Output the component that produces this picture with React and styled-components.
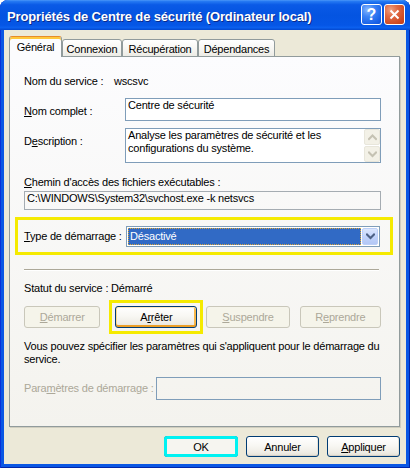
import React from 'react';
import styled, { createGlobalStyle } from 'styled-components';

const Global = createGlobalStyle`
  html, body { margin: 0; padding: 0; background: #ffffff; }
  body { font-family: "Liberation Sans", Arial, sans-serif; font-size: 11px; color: #000; letter-spacing: -0.2px; }
  #root { width: 410px; height: 468px; }
`;

const Window = styled.div`
  width: 410px;
  height: 468px;
  box-sizing: border-box;
  display: flex;
  flex-direction: column;
  background: #0a57e4;
  border-radius: 8px 8px 0 0;
  overflow: hidden;
  box-shadow: inset 1px 0 #0831d9, inset -1px 0 #0025a8, inset 0 -1px #0025a8;
`;

const TitleBar = styled.div`
  height: 30px;
  flex: none;
  display: flex;
  align-items: center;
  padding: 2px 5px 0 7px;
  box-sizing: border-box;
  background: linear-gradient(180deg, #4a97f8 0%, #2478f2 5%, #0a5ae6 16%, #0454e1 50%, #0556e6 84%, #0b60ee 92%, #0348cf 100%);
`;

const Title = styled.div`
  flex: 1;
  color: #fff;
  font: bold 13px "Liberation Sans", Arial, sans-serif;
  letter-spacing: -0.15px;
  text-shadow: 1px 1px 0 #0c2a8a;
  white-space: nowrap;
`;

const Controls = styled.div`
  display: flex;
  gap: 2px;
  margin-top: -3px;
`;

const CtrlButton = styled.div`
  width: 21px;
  height: 21px;
  box-sizing: border-box;
  border: 1px solid #fff;
  border-radius: 3px;
  display: flex;
  align-items: center;
  justify-content: center;
  color: #fff;
  font: bold 16px "Liberation Sans", Arial, sans-serif;
  letter-spacing: 0;
  background: ${p => p.$close
    ? 'radial-gradient(circle at 30% 25%, #f0a080 0%, #e06a44 35%, #cf4a22 75%, #c03c18 100%)'
    : 'radial-gradient(circle at 30% 25%, #8ab8ff 0%, #3d84f5 35%, #1a62e8 75%, #0f52d8 100%)'};
`;

const Body = styled.div`
  flex: 1;
  margin: 0 4px 4px 4px;
  padding: 6px 6px 0 5px;
  background: #ece9d8;
  display: flex;
  flex-direction: column;
`;

const TabRow = styled.div`
  display: flex;
  align-items: flex-end;
  height: 21px;
  margin-bottom: -1px;
  position: relative;
  z-index: 1;
`;

const Tab = styled.div`
  width: ${p => p.$w}px;
  height: ${p => (p.$active ? 21 : 18)}px;
  box-sizing: border-box;
  display: flex;
  align-items: center;
  justify-content: center;
  border: 1px solid #919b9c;
  border-radius: 3px 3px 0 0;
  padding-top: ${p => (p.$active ? 0 : 1)}px;
  ${p => p.$active
    ? `border-bottom: none; border-top: 1px solid #e68b2c; background: #fcfcfe; box-shadow: inset 0 2px #ffc83c;`
    : `background: linear-gradient(180deg, #ffffff 0%, #f6f5f1 60%, #ecebe5 100%);`}
`;

const Panel = styled.div`
  height: 371px;
  box-sizing: border-box;
  border: 1px solid #919b9c;
  box-shadow: 1px 1px 0 #d0cebf;
  background: linear-gradient(180deg, #fcfcfe 0%, #f4f3ee 100%);
  padding: 18px 18px 0 14px;
  display: flex;
  flex-direction: column;
`;

const Line = styled.div`
  line-height: 13px;
  margin-top: ${p => p.$mt || 0}px;
  color: ${p => (p.$disabled ? '#aca899' : '#000')};
  white-space: nowrap;
`;

const Para = styled.div`
  line-height: 13px;
  margin-top: ${p => p.$mt || 0}px;
  white-space: nowrap;
`;

const FieldRow = styled.div`
  display: grid;
  grid-template-columns: ${p => p.$label}px 1fr;
  align-items: start;
  margin-top: ${p => p.$mt || 0}px;
`;

const Label = styled.div`
  line-height: 13px;
  padding-top: ${p => p.$pt || 0}px;
  color: ${p => (p.$disabled ? '#aca899' : '#000')};
  white-space: nowrap;
`;

const TextBox = styled.div`
  height: ${p => p.$h}px;
  margin-top: ${p => p.$mt || 0}px;
  box-sizing: border-box;
  border: 1px solid ${p => (p.$gray ? '#a5acb2' : '#7f9db9')};
  background: ${p => (p.$readonly ? 'transparent' : '#fff')};
  padding: 0 2px;
  line-height: 13px;
  display: flex;
  white-space: nowrap;
`;

const BoxText = styled.div`
  flex: 1;
`;

const ScrollCol = styled.div`
  width: 16px;
  display: flex;
  flex-direction: column;
  gap: 1px;
  margin-right: -2px;
`;

const ScrollBtn = styled.div`
  height: 16px;
  box-sizing: border-box;
  border: 1px solid #e8e6db;
  border-radius: 2px;
  background: #f3f1e7;
  display: flex;
  align-items: center;
  justify-content: center;
`;

const Highlight = styled.div`
  margin: 7px -12px 0 -9px;
  border: 3px solid #f5ea00;
  padding: 6px 0 5px 6px;
  display: grid;
  grid-template-columns: 102px 254px;
  align-items: start;
`;

const Combo = styled.div`
  height: 21px;
  box-sizing: border-box;
  border: 1px solid #7f9db9;
  background: #fff;
  display: flex;
  align-items: stretch;
  padding: 1px;
  gap: 1px;
`;

const Selection = styled.div`
  flex: 1;
  background: #316ac5;
  color: #fff;
  border: 1px dotted #d9a53a;
  line-height: 15px;
  padding-left: 1px;
`;

const DropBtn = styled.div`
  width: 16px;
  box-sizing: border-box;
  border: 1px solid #bccff7;
  border-radius: 2px;
  background: linear-gradient(180deg, #dbe6fd 0%, #c2d4fb 50%, #b3c7f5 100%);
  display: flex;
  align-items: center;
  justify-content: center;
`;

const Separator = styled.div`
  margin-top: 14px;
  margin-right: 2px;
  height: 1px;
  background: #aca899;
  box-shadow: 0 1px 0 #ffffff;
`;

const ButtonRow = styled.div`
  display: flex;
  margin-top: 11px;
`;

const Button = styled.button`
  width: ${p => p.$w}px;
  height: ${p => p.$h || 22}px;
  margin-left: ${p => p.$ml || 0}px;
  padding: 0;
  box-sizing: border-box;
  font: 11px "Liberation Sans", Arial, sans-serif;
  letter-spacing: -0.2px;
  color: #000;
  border: 1px solid #003c74;
  border-radius: 3px;
  background: linear-gradient(180deg, #ffffff 0%, #f8f7f3 45%, #efede6 80%, #e4e1d6 100%);
  box-shadow: inset 0 -1px #d6d0c5, inset -1px 0 #e6e3d9;
  ${p => p.$hot && `
    box-shadow: inset 0 -2px #eb9e26, inset 0 1px #fde8c1, inset 1px 0 #fcd895, inset -2px 0 #f7b84b;
  `}
  ${p => p.$disabled && `
    border-color: #c9c7ba;
    color: #aca899;
    background: #f5f4ea;
    box-shadow: none;
  `}
  ${p => p.$cyan && `
    outline: 3px solid #00f2f2;
    outline-offset: -3px;
    background: #f6f5f0;
  `}
`;

const Footer = styled.div`
  display: flex;
  justify-content: flex-end;
  gap: 8px;
  margin-top: 9px;
`;

const HotWrap = styled.div`
  margin-left: 15px;
  outline: 3px solid #f5ea00;
  outline-offset: 3px;
  height: 22px;
`;

const Chevron = ({ dir = 'down', color = '#4d6185' }) => (
  <svg width="9" height="7" viewBox="0 0 9 7">
    <path
      d={dir === 'down' ? 'M1 1.5 L4.5 5 L8 1.5' : 'M1 5 L4.5 1.5 L8 5'}
      fill="none"
      stroke={color}
      strokeWidth="2"
      strokeLinecap="square"
    />
  </svg>
);

export default function App() {
  return (
    <>
      <Global />
      <Window>
        <TitleBar>
          <Title>Propriétés de Centre de sécurité (Ordinateur local)</Title>
          <Controls>
            <CtrlButton>?</CtrlButton>
            <CtrlButton $close>
              <svg width="11" height="11" viewBox="0 0 11 11">
                <path d="M1.5 1.5 L9.5 9.5 M9.5 1.5 L1.5 9.5" stroke="#fff" strokeWidth="2" fill="none" />
              </svg>
            </CtrlButton>
          </Controls>
        </TitleBar>
        <Body>
          <TabRow>
            <Tab $active $w={53}>Général</Tab>
            <Tab $w={60}>Connexion</Tab>
            <Tab $w={76}>Récupération</Tab>
            <Tab $w={77}>Dépendances</Tab>
          </TabRow>
          <Panel>
            <FieldRow $label={90}>
              <Label>Nom du service :</Label>
              <Label>wscsvc</Label>
            </FieldRow>
            <FieldRow $label={101} $mt={10}>
              <Label $pt={7}><u>N</u>om complet :</Label>
              <TextBox $h={23}><BoxText>Centre de sécurité</BoxText></TextBox>
            </FieldRow>
            <FieldRow $label={101} $mt={7}>
              <Label $pt={7}>D<u>e</u>scription :</Label>
              <TextBox $h={35}>
                <BoxText>Analyse les paramètres de sécurité et les<br />configurations du système.</BoxText>
                <ScrollCol>
                  <ScrollBtn><Chevron dir="up" color="#c5c2b3" /></ScrollBtn>
                  <ScrollBtn><Chevron dir="down" color="#c5c2b3" /></ScrollBtn>
                </ScrollCol>
              </TextBox>
            </FieldRow>
            <Line $mt={13}><u>C</u>hemin d'accès des fichiers exécutables :</Line>
            <TextBox $h={19} $mt={2} $gray $readonly>
              <BoxText>C:\WINDOWS\System32\svchost.exe -k netsvcs</BoxText>
            </TextBox>
            <Highlight>
              <Label $pt={4}><u>T</u>ype de démarrage :</Label>
              <Combo>
                <Selection>Désactivé</Selection>
                <DropBtn><Chevron /></DropBtn>
              </Combo>
            </Highlight>
            <Separator />
            <Line $mt={12}>Statut du service : Démarré</Line>
            <ButtonRow>
              <Button $w={77} $disabled><u>D</u>émarrer</Button>
              <HotWrap>
                <Button $w={82} $hot>A<u>r</u>rêter</Button>
              </HotWrap>
              <Button $w={84} $ml={9} $disabled><u>S</u>uspendre</Button>
              <Button $w={82} $ml={10} $disabled>R<u>e</u>prendre</Button>
            </ButtonRow>
            <Para $mt={12}>
              Vous pouvez spécifier les paramètres qui s'appliquent pour le démarrage du<br />service.
            </Para>
            <FieldRow $label={132} $mt={11}>
              <Label $pt={5} $disabled>Para<u>m</u>ètres de démarrage :</Label>
              <TextBox $h={23} $readonly />
            </FieldRow>
          </Panel>
          <Footer>
            <Button $w={74} $h={21} $cyan>OK</Button>
            <Button $w={73} $h={21}>Annuler</Button>
            <Button $w={73} $h={21}><u>A</u>ppliquer</Button>
          </Footer>
        </Body>
      </Window>
    </>
  );
}
